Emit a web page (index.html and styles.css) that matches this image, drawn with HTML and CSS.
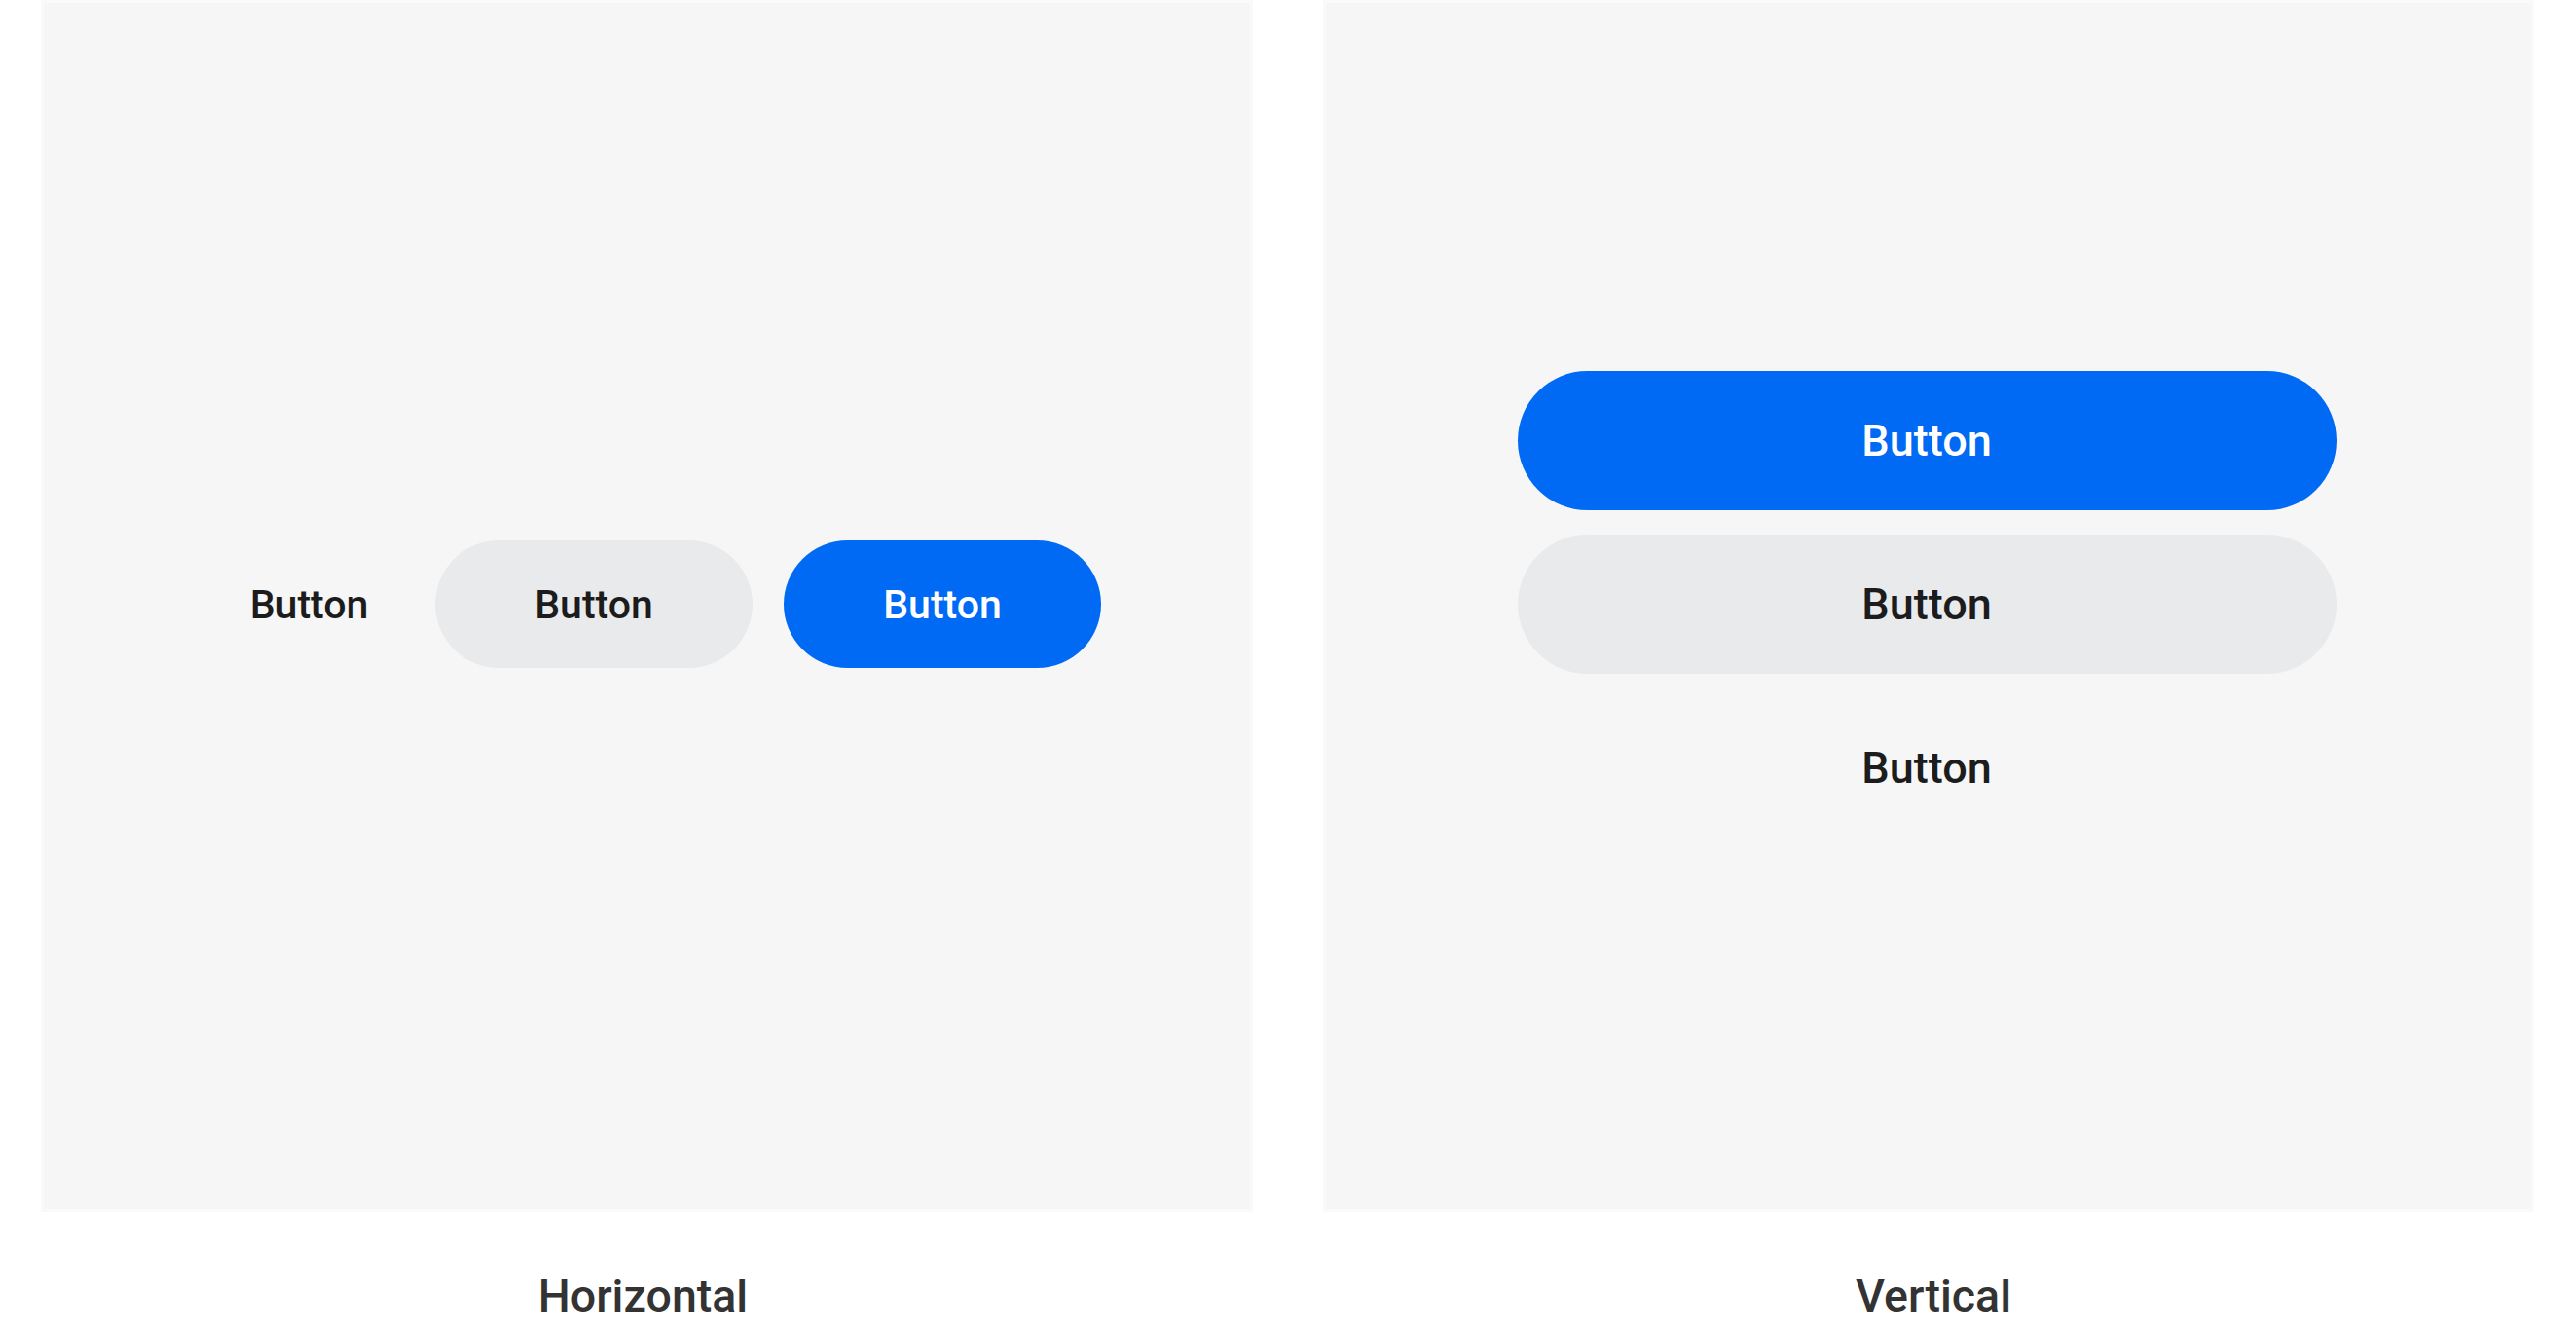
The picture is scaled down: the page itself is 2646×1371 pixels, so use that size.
FILE: index.html
```html
<!DOCTYPE html>
<html lang="en">
<head>
<meta charset="utf-8">
<title>Button groups</title>
<link rel="stylesheet" href="styles.css">
</head>
<body>
<main class="examples">
  <figure class="example">
    <div class="frame">
      <div class="canvas canvas-horizontal">
        <div class="group-h">
          <button class="btn btn-text btn-h-text">Button</button>
          <button class="btn btn-secondary btn-h">Button</button>
          <button class="btn btn-primary btn-h">Button</button>
        </div>
      </div>
    </div>
    <figcaption class="caption caption-left">Horizontal</figcaption>
  </figure>
  <figure class="example">
    <div class="frame">
      <div class="canvas canvas-vertical">
        <div class="group-v">
          <button class="btn btn-primary btn-v">Button</button>
          <button class="btn btn-secondary btn-v">Button</button>
          <button class="btn btn-text btn-v">Button</button>
        </div>
      </div>
    </div>
    <figcaption class="caption caption-right">Vertical</figcaption>
  </figure>
</main>
</body>
</html>
```
FILE: styles.css
```css
html, body {
  margin: 0;
  padding: 0;
  background: #ffffff;
}

body {
  font-family: Roboto, "Liberation Sans", Arial, sans-serif;
  width: 2646px;
  height: 1371px;
  overflow: hidden;
}

.examples {
  display: grid;
  grid-template-columns: 1245px 1244px;
  column-gap: 72px;
  padding: 0 43px 0 42px;
}

.example {
  margin: 0;
  display: flex;
  flex-direction: column;
}

.frame {
  height: 1245px;
  box-sizing: border-box;
  border: 3px solid #fafafa;
  background: #f6f6f6;
  display: flex;
}

.canvas {
  flex: 1;
  display: flex;
  align-items: center;
  justify-content: center;
  padding-bottom: 4px;
}

.canvas-horizontal {
  padding-left: 22px;
}

.group-h {
  display: flex;
  align-items: center;
  gap: 32px;
}

.group-v {
  display: flex;
  flex-direction: column;
  gap: 25px;
  padding-right: 4px;
}

.btn {
  border: 0;
  margin: 0;
  padding: 0;
  font-family: Roboto, "Liberation Sans", Arial, sans-serif;
  font-weight: 500;
  display: flex;
  align-items: center;
  justify-content: center;
  border-radius: 999px;
  background: transparent;
  color: #1c1c1c;
  cursor: pointer;
}

.btn-h {
  width: 326px;
  height: 131px;
  font-size: 41px;
}

.btn-h-text {
  width: 195px;
  height: 131px;
  font-size: 41px;
}

.btn-v {
  width: 841px;
  height: 143px;
  font-size: 45px;
}

.btn-primary {
  background: #006af5;
  color: #ffffff;
}

.btn-secondary {
  background: #e9eaec;
  color: #1c1c1c;
}

.btn-text {
  background: transparent;
  color: #1c1c1c;
}

.caption {
  margin: 59px 0 0;
  text-align: center;
  font-size: 46.5px;
  line-height: 54px;
  font-weight: 500;
  color: #333333;
}

.caption-left {
  padding-right: 8px;
}

.caption-right {
  padding-left: 10px;
}
```
